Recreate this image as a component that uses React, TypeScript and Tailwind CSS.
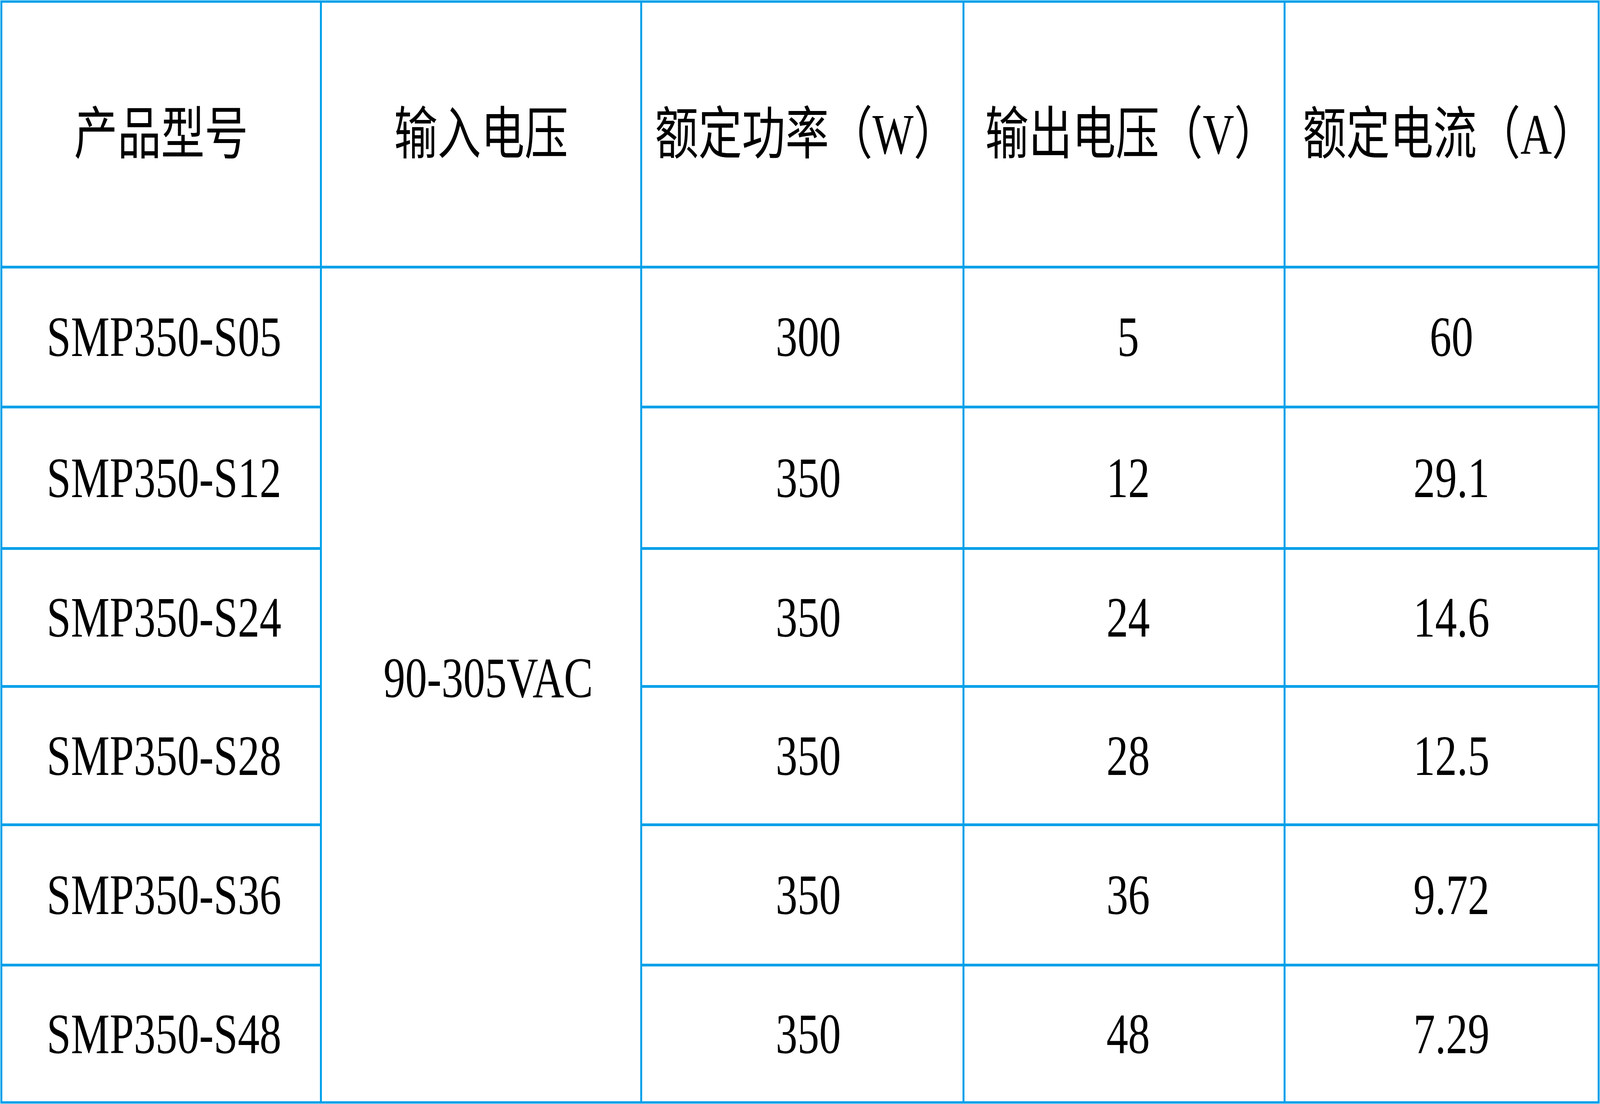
import { Fragment } from 'react';

const headers = [
  { text: '产品型号', pad: '' },
  { text: '输入电压', pad: '' },
  { text: '额定功率（W）', pad: 'pl-[0.45vw]' },
  { text: '输出电压（V）', pad: 'pl-[0.93vw]' },
  { text: '额定电流（A）', pad: 'pl-[0.93vw]' },
];

const rows = [
  ['SMP350-S05', '300', '5', '60'],
  ['SMP350-S12', '350', '12', '29.1'],
  ['SMP350-S24', '350', '24', '14.6'],
  ['SMP350-S28', '350', '28', '12.5'],
  ['SMP350-S36', '350', '36', '9.72'],
  ['SMP350-S48', '350', '48', '7.29'],
];

const cell = 'bg-white flex items-center justify-center whitespace-nowrap';

// glyphs in the source are tall and narrow
function Txt({ children }: { children: string }) {
  return <span className="inline-block scale-y-[1.31]">{children}</span>;
}

export default function App() {
  return (
    <div className="w-full h-screen bg-white p-px font-['Liberation_Serif','Noto_Sans_CJK_SC',serif] text-[2.72vw] leading-none text-black">
      <div className="w-full h-full bg-[#00a0e9] px-[5px] py-[6px] grid gap-x-[5px] gap-y-[7px] grid-cols-[1067fr_1071fr_1076fr_1073fr_1049fr] grid-rows-[674fr_352fr_356fr_347fr_347fr_353fr_346fr]">
        {/* header */}
        {headers.map(h => (
          <div key={h.text} className={`${cell} ${h.pad}`}><Txt>{h.text}</Txt></div>
        ))}

        {/* body */}
        {rows.map(([model, power, volt, amp], i) => (
          <Fragment key={model}>
            <div className={`${cell} pl-[0.37vw]`}><Txt>{model}</Txt></div>
            {i === 0 && (
              <div className={`${cell} col-start-2 row-start-2 row-span-6 pl-[0.9vw] pb-[36px]`}><Txt>90-305VAC</Txt></div>
            )}
            <div className={`${cell} pl-[0.74vw]`}><Txt>{power}</Txt></div>
            <div className={`${cell} pl-[0.52vw]`}><Txt>{volt}</Txt></div>
            <div className={`${cell} pl-[1.23vw]`}><Txt>{amp}</Txt></div>
          </Fragment>
        ))}
      </div>
    </div>
  );
}
